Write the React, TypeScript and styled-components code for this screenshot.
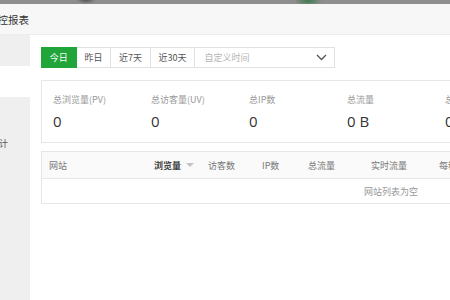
import React, { FC } from "react";
import styled, { createGlobalStyle } from "styled-components";

const GlobalStyle = createGlobalStyle`
  html, body {
    margin: 0;
    padding: 0;
    background: #ffffff;
    overflow: hidden;
  }
  body {
    font-family: "Noto Sans CJK SC", "Open Sans", "Liberation Sans", sans-serif;
    -webkit-font-smoothing: antialiased;
  }
  * {
    box-sizing: border-box;
  }
`;

const Page = styled.div`
  width: 450px;
  height: 300px;
  display: flex;
  flex-direction: column;
  overflow: hidden;
`;

// the dimmed page behind the popup
const Backdrop = styled.div`
  height: 4px;
  flex-shrink: 0;
  background:
    radial-gradient(ellipse 10px 4px at 86px 0px, #555 0%, rgba(85, 85, 85, 0) 100%),
    radial-gradient(ellipse 14px 5px at 308px 1px, #3f7a4c 0%, rgba(63, 122, 76, 0) 100%),
    #8e8e8e;
`;

const TitleBar = styled.div`
  height: 31px;
  flex-shrink: 0;
  display: flex;
  align-items: center;
  background: #f7f7f7;
  border-bottom: 1px solid #ececec;
  overflow: hidden;
`;

// the popup is wider than the view, so the start of the title lies off to the left
const Title = styled.div`
  margin-left: -13px;
  font-size: 10.5px;
  color: #333;
  white-space: nowrap;
`;

const Body = styled.div`
  flex: 1;
  display: flex;
  min-height: 0;
`;

const Side = styled.div`
  width: 30px;
  flex-shrink: 0;
  background: #efefef;
  overflow: hidden;
`;

const SideItem = styled.div<{ active?: boolean }>`
  height: 31px;
  display: flex;
  align-items: center;
  background: ${({ active }) => (active ? "#ffffff" : "#efefef")};
  font-size: 9px;
  color: #555;
  white-space: nowrap;
`;

const SideLabel = styled.span`
  margin-left: -28px;
`;

const Main = styled.div`
  flex: 1;
  padding: 12px 0 0 11px;
  overflow: hidden;
  background: #ffffff;
`;

const Toolbar = styled.div`
  display: flex;
  height: 21px;
`;

const Tab = styled.div<{ active?: boolean }>`
  height: 21px;
  padding: 0 7.8px;
  display: flex;
  align-items: center;
  font-size: 9px;
  color: ${({ active }) => (active ? "#ffffff" : "#555")};
  background: ${({ active }) => (active ? "#20a53a" : "#ffffff")};
  border: 1px solid ${({ active }) => (active ? "#20a53a" : "#e2e2e2")};
  border-left-width: ${({ active }) => (active ? "1px" : "0")};
  white-space: nowrap;
`;

const DateInput = styled.div`
  width: 140px;
  height: 21px;
  display: flex;
  align-items: center;
  justify-content: space-between;
  padding: 0 7px 0 9px;
  border: 1px solid #e2e2e2;
  border-left-width: 0;
  font-size: 9px;
  color: #b5b5b5;
`;

const Card = styled.div`
  margin-top: 12px;
  width: 700px;
  height: 63px;
  border: 1px solid #e6e6e6;
  display: flex;
  padding: 13px 0 0 11px;
`;

const Stat = styled.div`
  width: 98px;
  display: flex;
  flex-direction: column;
  gap: 5px;
`;

const StatLabel = styled.div`
  font-size: 9px;
  line-height: 12px;
  color: #999;
  white-space: nowrap;
`;

const StatValue = styled.div`
  font-family: "Open Sans", "Liberation Sans", sans-serif;
  font-size: 15px;
  line-height: 20px;
  color: #333;
  white-space: nowrap;
`;

const Table = styled.div`
  margin-top: 8px;
  width: 700px;
  border: 1px solid #e6e6e6;
`;

const HeadRow = styled.div`
  height: 27px;
  display: grid;
  grid-template-columns: 105px 54px 54px 46px 63px 68px 1fr;
  align-items: center;
  background: #fafafa;
  border-bottom: 1px solid #e8e8e8;
`;

const HeadCell = styled.div<{ sorted?: boolean }>`
  padding-left: 7px;
  font-size: 9px;
  color: ${({ sorted }) => (sorted ? "#444" : "#777")};
  font-weight: ${({ sorted }) => (sorted ? 600 : 400)};
  white-space: nowrap;
  display: flex;
  align-items: center;
`;

const SortArrow = styled.span`
  margin-left: 5px;
  width: 0;
  height: 0;
  border-left: 4px solid transparent;
  border-right: 4px solid transparent;
  border-top: 4px solid #c4c4c4;
`;

const Empty = styled.div`
  height: 24px;
  display: flex;
  align-items: center;
  justify-content: center;
  font-size: 9px;
  color: #999;
`;

const Chevron: FC = () => (
  <svg width="11" height="7" viewBox="0 0 11 7" fill="none">
    <path d="M1 1l4.5 4.5L10 1" stroke="#555" strokeWidth="1.3" />
  </svg>
);

const tabs = ["今日", "昨日", "近7天", "近30天"];

const stats = [
  { label: "总浏览量(PV)", value: "0" },
  { label: "总访客量(UV)", value: "0" },
  { label: "总IP数", value: "0" },
  { label: "总流量", value: "0 B" },
  { label: "总请求", value: "0" },
];

const columns = ["网站", "浏览量", "访客数", "IP数", "总流量", "实时流量", "每秒请求"];

export default function App() {
  return (
    <>
      <GlobalStyle />
      <Page>
        <Backdrop />
        <TitleBar>
          <Title>监控报表</Title>
        </TitleBar>
        <Body>
          <Side>
            <SideItem>
              <SideLabel>概览</SideLabel>
            </SideItem>
            <SideItem active>
              <SideLabel>报表</SideLabel>
            </SideItem>
            <SideItem>
              <SideLabel>日志</SideLabel>
            </SideItem>
            <SideItem>
              <SideLabel>蜘蛛统计</SideLabel>
            </SideItem>
          </Side>
          <Main>
            <Toolbar>
              {tabs.map((t, i) => (
                <Tab key={t} active={i === 0}>
                  {t}
                </Tab>
              ))}
              <DateInput>
                <span>自定义时间</span>
                <Chevron />
              </DateInput>
            </Toolbar>
            <Card>
              {stats.map((s) => (
                <Stat key={s.label}>
                  <StatLabel>{s.label}</StatLabel>
                  <StatValue>{s.value}</StatValue>
                </Stat>
              ))}
            </Card>
            <Table>
              <HeadRow>
                {columns.map((c) => (
                  <HeadCell key={c} sorted={c === "浏览量"}>
                    {c}
                    {c === "浏览量" && <SortArrow />}
                  </HeadCell>
                ))}
              </HeadRow>
              <Empty>网站列表为空</Empty>
            </Table>
          </Main>
        </Body>
      </Page>
    </>
  );
}
